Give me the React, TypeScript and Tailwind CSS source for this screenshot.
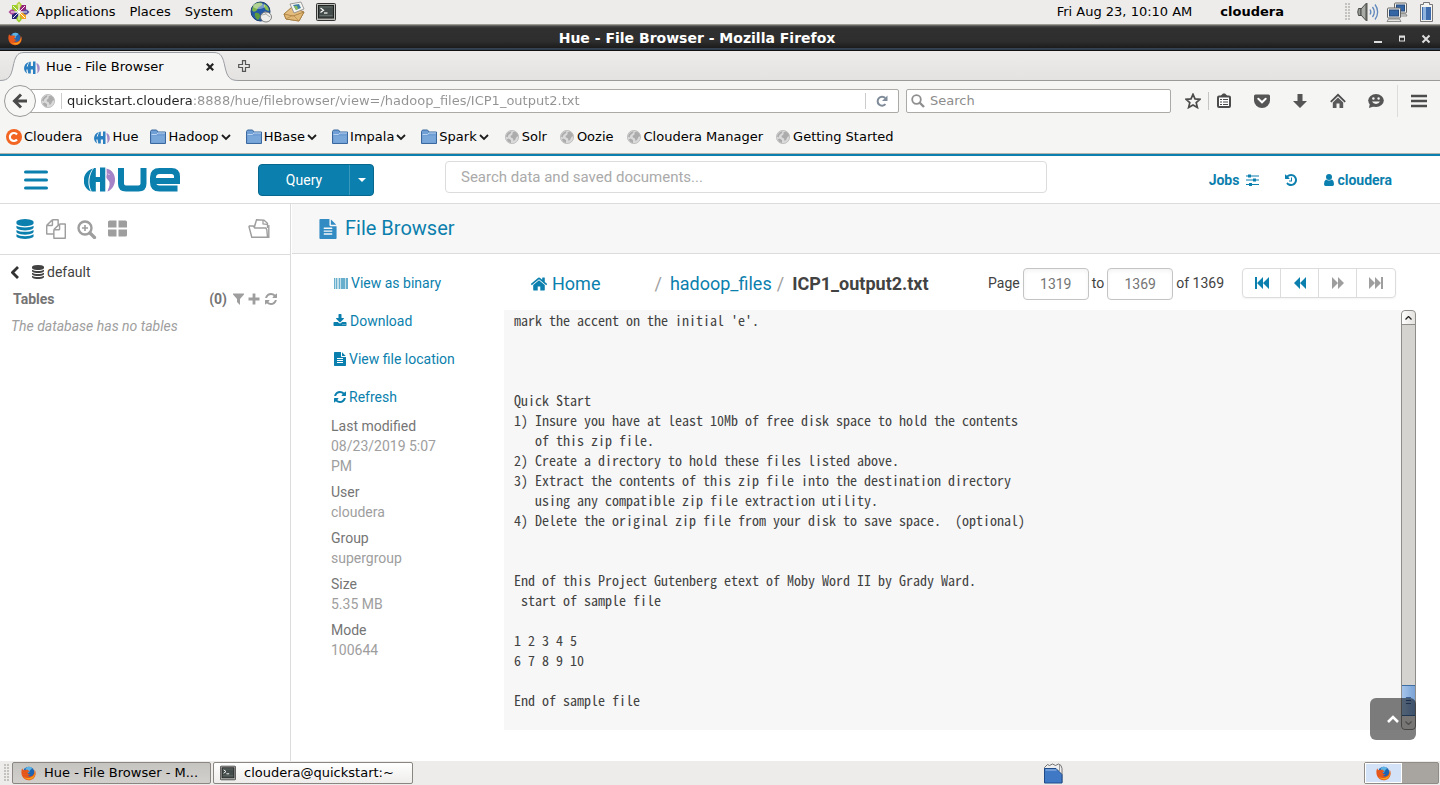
import type { ReactNode } from "react";

/* ---------- glyph icons on the 1792 grid ---------- */

const GLYPHS = {
  refresh:
    "M1639 1056q0 5-1 7-64 268-268 434.5t-478 166.5q-146 0-282.5-55t-243.5-157l-129 129q-19 19-45 19t-45-19-19-45v-448q0-26 19-45t45-19h448q26 0 45 19t19 45-19 45l-137 137q71 66 161 102t187 36q134 0 250-65t186-179q11-17 53-117 8-23 30-23h192q13 0 22.5 9.5t9.5 22.5zm25-800v448q0 26-19 45t-45 19h-448q-26 0-45-19t-19-45 19-45l138-138q-148-137-349-137-134 0-250 65t-186 179q-11 17-53 117-8 23-30 23h-199q-13 0-22.5-9.5t-9.5-22.5v-7q65-268 270-434.5t480-166.5q146 0 284 55.5t245 156.5l130-129q19-19 45-19t45 19 19 45z",
  database:
    "M896 768q237 0 443-43t325-127v170q0 69-103 128t-280 93.5-385 34.5-385-34.5-280-93.5-103-128v-170q119 84 325 127t443 43zm0 768q237 0 443-43t325-127v170q0 69-103 128t-280 93.5-385 34.5-385-34.5-280-93.5-103-128v-170q119 84 325 127t443 43zm0-384q237 0 443-43t325-127v170q0 69-103 128t-280 93.5-385 34.5-385-34.5-280-93.5-103-128v-170q119 84 325 127t443 43zm0-1152q208 0 385 34.5t280 93.5 103 128v128q0 69-103 128t-280 93.5-385 34.5-385-34.5-280-93.5-103-128v-128q0-69 103-128t280-93.5 385-34.5z",
  home: "M1472 992v480q0 26-19 45t-45 19h-384v-384h-256v384h-384q-26 0-45-19t-19-45v-480q0-1 .5-3t.5-3l575-474 575 474q1 2 1 6zm223-69l-62 74q-8 9-21 11h-3q-13 0-21-7l-692-577-692 577q-12 8-24 7-13-2-21-11l-62-74q-8-10-7-23.5t11-21.5l719-599q32-26 76-26t76 26l244 204v-195q0-14 9-23t23-9h192q14 0 23 9t9 23v408l219 182q10 8 11 21.5t-7 23.5z",
  download:
    "M1344 1344q0-26-19-45t-45-19-45 19-19 45 19 45 45 19 45-19 19-45zm256 0q0-26-19-45t-45-19-45 19-19 45 19 45 45 19 45-19 19-45zm128-224v320q0 40-28 68t-68 28h-1472q-40 0-68-28t-28-68v-320q0-40 28-68t68-28h465l135 136q58 56 136 56t136-56l136-136h464q40 0 68 28t28 68zm-325-569q17 41-14 70l-448 448q-18 19-45 19t-45-19l-448-448q-31-29-14-70 17-39 59-39h256v-448q0-26 19-45t45-19h256q26 0 45 19t19 45v448h256q42 0 59 39z",
  fileText:
    "M1596 476q14 14 28 36h-472v-472q22 14 36 28zm-476 164h544v1056q0 40-28 68t-68 28h-1344q-40 0-68-28t-28-68v-1600q0-40 28-68t68-28h800v544q0 40 28 68t68 28zm160 736v-64q0-14-9-23t-23-9h-704q-14 0-23 9t-9 23v64q0 14 9 23t23 9h704q14 0 23-9t9-23zm0-256v-64q0-14-9-23t-23-9h-704q-14 0-23 9t-9 23v64q0 14 9 23t23 9h704q14 0 23-9t9-23zm0-256v-64q0-14-9-23t-23-9h-704q-14 0-23 9t-9 23v64q0 14 9 23t23 9h704q14 0 23-9t9-23z",
  files:
    "M1696 384q40 0 68 28t28 68v1216q0 40-28 68t-68 28h-960q-40 0-68-28t-28-68v-288h-544q-40 0-68-28t-28-68v-672q0-40 20-88t48-76l408-408q28-28 76-48t88-20h416q40 0 68 28t28 68v328q68-40 128-40h416zm-544 213l-299 299h299v-299zm-640-384l-299 299h299v-299zm196 647l316-316v-416h-384v416q0 40-28 68t-68 28h-416v640h512v-256q0-40 20-88t48-76zm956 804v-1152h-384v416q0 40-28 68t-68 28h-416v640h896z",
  history:
    "M1664 896q0 156-61 298t-164 245-245 164-298 61q-172 0-327-72.5t-264-204.5q-7-10-6.5-22.5t8.5-20.5l137-138q10-9 25-9 16 2 23 12 73 95 179 147t225 52q104 0 198.5-40.5t163.5-109.5 109.5-163.5 40.5-198.5-40.5-198.5-109.5-163.5-163.5-109.5-198.5-40.5q-98 0-188 35.5t-160 101.5l137 138q31 30 14 69-17 40-59 40h-448q-26 0-45-19t-19-45v-448q0-42 40-59 39-17 69 14l130 129q107-101 244.5-156.5t284.5-55.5q156 0 298 61t245 164 164 245 61 298zm-640-288v448q0 14-9 23t-23 9h-320q-14 0-23-9t-9-23v-64q0-14 9-23t23-9h224v-352q0-14 9-23t23-9h64q14 0 23 9t9 23z",
};

function Glyph({ name, className }: { name: keyof typeof GLYPHS; className: string }) {
  return (
    <svg viewBox="0 0 1792 1792" className={`shrink-0 ${className}`} fill="currentColor" aria-hidden="true">
      <path d={GLYPHS[name]} />
    </svg>
  );
}

function Svg({ box, className, children }: { box: string; className: string; children: ReactNode }) {
  return (
    <svg viewBox={box} className={`shrink-0 ${className}`} fill="none" aria-hidden="true">
      {children}
    </svg>
  );
}

/* ---------- desktop icons ---------- */

function CentosIcon() {
  return (
    <Svg box="0 0 22 22" className="size-[22px]">
      <path d="M4 4h6.500v6.500h-6.500z" fill="#9ccd2a" />
      <path d="M11.500 4h6.500v6.500h-6.500z" fill="#932279" />
      <path d="M4 11.500h6.500v6.500h-6.500z" fill="#262577" />
      <path d="M11.500 11.500h6.500v6.500h-6.500z" fill="#efa724" />
      <path d="M11 .5l2.500 2.500v2L11 8 8.500 5V3z" fill="#b8d442" />
      <path d="M11 21.500l2.500-2.500v-2L11 14 8.500 17v2z" fill="#9ccd2a" />
      <path d="M.5 11l2.500-2.500h2L8 11 5 13.500H3z" fill="#b04a9a" />
      <path d="M21.500 11L19 8.500h-2L14 11l3 2.500h2z" fill="#5452a0" />
      <path d="M11 3v16M3 11h16M5 5l12 12M17 5L5 17" stroke="#fff" strokeWidth=".9" />
    </Svg>
  );
}

function GlobeMouseIcon() {
  return (
    <Svg box="0 0 22 22" className="size-[22px]">
      <circle cx="10.500" cy="10.500" r="9.500" fill="#2459a5" stroke="#1b3f70" strokeWidth="1" />
      <path d="M3 5c3-4 7-4 9-3 1 2-1 3-3 4s-1 3-3 4-3 1-4-1z" fill="#7fb64b" />
      <path d="M14 3c3 1 5 4 5 7l-3-1-2-3z" fill="#8cc152" />
      <path d="M5 12c3-1 5 1 5 3s-1 3-2 4c-2-1-4-4-3-7z" fill="#5e9a3b" />
      <ellipse cx="9" cy="5" rx="6" ry="3" fill="#fff" opacity=".4" />
      <ellipse cx="16" cy="16" rx="5.500" ry="5" fill="#eeeeec" stroke="#666" strokeWidth=".8" />
      <path d="M12 14l4-1 4 3M16 13l-1-3" stroke="#999" strokeWidth=".8" />
    </Svg>
  );
}

function MailIcon() {
  return (
    <Svg box="0 0 22 22" className="size-[22px]">
      <path d="M1 13l8-7 12 5-5 9-13-2z" fill="#e3bc7e" stroke="#a37a3d" strokeWidth="1" />
      <path d="M7 3l11-2 3 7-10 4z" fill="#f5f5f2" stroke="#888" strokeWidth=".8" />
      <path d="M10 4l6-1 2 4-5 2z" fill="#3f7fa6" />
      <path d="M11 5l3 0 1 3-2 1z" fill="#8dbf5a" />
      <path d="M1 13l9 2 11-4-5 9-13-2z" fill="#e0b775" stroke="#a37a3d" strokeWidth=".8" />
      <path d="M3 18l7-4 6 6" stroke="#b98d4c" strokeWidth=".8" />
    </Svg>
  );
}

function TerminalIcon({ className }: { className: string }) {
  return (
    <Svg box="0 0 20 20" className={className}>
      <rect x=".5" y="1.500" width="19" height="17" rx="1" fill="#b9bbb7" stroke="#333" />
      <rect x="2.500" y="3.500" width="15" height="12.500" fill="#434c4a" stroke="#222" />
      <path d="M4.500 6l3 2.200-3 2.200" stroke="#fff" strokeWidth="1.200" />
      <path d="M8 11h3.500" stroke="#fff" strokeWidth="1.200" />
      <path d="M3.500 13.500h13M3.500 5h13" stroke="#69736f" strokeWidth=".8" />
    </Svg>
  );
}

function FirefoxIcon({ className }: { className: string }) {
  return (
    <Svg box="0 0 16 16" className={className}>
      <circle cx="8.200" cy="7" r="6.200" fill="#1d64b2" />
      <path d="M5 2c2-1.500 5-1.500 7 0-1 2-3 2-3 4s-2 1-3 0-1-3-1-4z" fill="#5cb3e4" />
      <path
        d="M1.300 2.300C0 5 0 9 2 12c2.500 3.600 8 4.200 11.400 1.200C16 10.800 16.200 6.500 14.500 3.600c.3 3-.4 4.800-1.600 6-1.800 2-4.600 2-6 .6 1.700.2 2.600-.5 3.100-1.300-1.800.2-2.600-1-3.200-1.900.5-.8 1.500-.6 2.200-1.200-.8-.6-1.300-1-1.500-1.800-1-.2-2 0-2.600.4C4 4 3.300 4.100 2.700 4.400 2 3.900 1.500 3.200 1.300 2.300z"
        fill="#e6571b"
      />
      <path d="M3 11.500c2.500 3.500 7.500 3.800 10.300.7 2-2.200 2.200-5.200 1.500-7.200.2 3-.7 5.200-2.600 6.500-3 2-7 1.800-9.200 0z" fill="#f8a51b" />
    </Svg>
  );
}

function SpeakerIcon() {
  return (
    <Svg box="0 0 22 20" className="h-5 w-[22px]">
      <path d="M1.500 6.500q-1.500 3.500 0 7h2.500v-7z" fill="#999b97" stroke="#4c4e4b" />
      <path d="M4 7l5-5.500v17L4 13z" fill="#a9aba7" stroke="#4c4e4b" />
      <path d="M9 1h1.500v18H9z" fill="#5b5d59" />
      <path d="M13 7.500c1 1.500 1 3.500 0 5M15.500 5c2.200 3 2.200 7 0 10M18 2.500c3.500 4.500 3.500 10.500 0 15" stroke="#5f86bd" strokeWidth="1.300" />
    </Svg>
  );
}

function NetworkIcon() {
  return (
    <Svg box="0 0 22 21" className="h-[21px] w-[22px]">
      <rect x="8.500" y="1" width="12" height="10" rx="1" fill="#f0f0ee" stroke="#666" />
      <rect x="10.500" y="3" width="8" height="6" fill="#3465a4" stroke="#244a7c" />
      <path d="M13 14h8l-1-2h-6z" fill="#e4e4e2" stroke="#777" strokeWidth=".8" />
      <rect x="1.500" y="6" width="13" height="10" rx="1" fill="#f0f0ee" stroke="#666" />
      <rect x="3.500" y="8" width="9" height="6" fill="#3465a4" stroke="#244a7c" />
      <path d="M1 19.500h14l-1.500-2.500h-11z" fill="#e4e4e2" stroke="#777" strokeWidth=".8" />
    </Svg>
  );
}

function BatteryIcon() {
  return (
    <Svg box="0 0 15 21" className="h-[21px] w-[15px]">
      <path d="M4.500 2.500v-2h6v2h3v17h-12v-17z" fill="#f4f4f2" stroke="#777" />
      <rect x="3" y="5" width="9" height="13" fill="#3f6cac" />
      <rect x="4" y="5" width="3" height="13" fill="#8fb3dd" />
    </Svg>
  );
}

function TrashIcon() {
  return (
    <Svg box="0 0 20 21" className="h-[21px] w-5">
      <path d="M1.500 4.500l3-3 2 1 3-1.500 3 1.500 3-1.500 2.500 1.500 1 3v14h-17.500z" fill="#eee" stroke="#555" strokeWidth=".8" />
      <path d="M1.500 5.500h11.500l6 6v8.500h-17.500z" fill="#3f78c4" stroke="#1f4a8a" />
      <path d="M2.500 7h11" stroke="#9fc0ea" />
      <path d="M16.500 2v6" stroke="#888" strokeWidth=".8" />
    </Svg>
  );
}

function Grip() {
  return <span className="h-[18px] w-[5px] bg-[radial-gradient(circle_at_1px_1px,#c4c2be_1px,transparent_1px)] bg-[size:3px_3px]" />;
}

/* ---------- browser icons ---------- */

function HueMark() {
  return (
    <Svg box="0 0 16 13" className="h-[13px] w-4">
      <path d="M5 1C-1.300 3-1.300 10.500 3.300 12.500 2.400 10.500 2.300 9 2.400 7.500 2.600 5 3.500 3 5 1z" fill="#2a7fc1" />
      <path d="M5.500.8H6.800V5H9V.5h2.500V13H9V8.500H6.800V12.500H4.300C3.200 9 3.300 4 5.500.8z" fill="#2a7fc1" />
      <path d="M2 5.500h4v3H2z" fill="#2a7fc1" />
      <path d="M12.500 2c4.300 1.500 4.300 8.500.5 10.500 1-3 .2-4 .2-6s-1-2.500-.7-4.500z" fill="#a68bc8" />
    </Svg>
  );
}

function HueLogo() {
  return (
    <svg viewBox="0 0 96 26" className="h-[26px] w-24 shrink-0" fill="none" role="img" aria-label="Hue">
      <path d="M9 1.500C-3 5-3 21 7 24.500 3 18 3.500 8 9 1.500z" fill="#0b7fad" />
      <path d="M10 1h1.800v9H16V.5h5.300V24.500H16V15H11.800v9.500H7.700C4 17.500 4.800 7.500 10 1z" fill="#0b7fad" />
      <path d="M22.500 1.500C34 4 33.500 21 23.500 24.500 24.500 21 26 19 25.500 15.500 25 12.500 21.500 12 22.500 9 23 7 22.500 5 22.500 1.500z" fill="#a682c6" />
      <path d="M24 6.500l1.500 1.500" stroke="#fff" strokeWidth=".8" />
      <path d="M37 1v15.500q0 5 5 5h12.500q5 0 5-5v-15.500" stroke="#0b7fad" strokeWidth="6" />
      <path d="M93.500 21.500h-18q-6.500 0-6.500-6.500v-4.500q0-6.500 6.500-6.500h12q5.500 0 5.500 5.500v4.500h-24" stroke="#0b7fad" strokeWidth="6" />
    </svg>
  );
}

function ClouderaIcon() {
  return (
    <Svg box="0 0 16 16" className="size-4">
      <circle cx="8" cy="8" r="8" fill="#f26522" />
      <path d="M11 5.500A4 4 0 1 0 11 10.500" stroke="#fff" strokeWidth="2.200" />
    </Svg>
  );
}

function FolderIcon() {
  return (
    <Svg box="0 0 16 16" className="size-4">
      <path d="M.5 14.500v-12l1-1.500h5l1.500 2h7.500v11.500z" fill="#6f9fd4" stroke="#3b689e" />
      <path d="M1.500 5.500l5 0 1.500-1.500h7" stroke="#b9d2ee" />
      <path d="M2 7h12.500v6.500h-12.500z" fill="#86b0e0" opacity=".5" />
    </Svg>
  );
}

function GlobeIcon() {
  return (
    <Svg box="0 0 14 14" className="size-[14px]">
      <circle cx="7" cy="7" r="6.600" fill="#dadada" stroke="#b8b8b8" strokeWidth=".8" />
      <path
        d="M1 6.500C1.500 3.500 4 1.500 6.500 1.200L6 3 3.500 5l-1 2.500zM7.500 2.500l2-1c2 .8 3.400 2.500 3.800 4.500l-1.800 1-1.500 3-1.500 1-.5-2.500-2-1L5.500 6l2-1.500zM3.500 8.500l2.500 1.500v3C4 12.800 2.500 11 1.800 9.500z"
        fill="#acacac"
      />
    </Svg>
  );
}

function SmallChevron() {
  return (
    <Svg box="0 0 10 10" className="size-[10px]">
      <path d="M1 3l4 4 4-4" stroke="#1c1c1c" strokeWidth="1.800" />
    </Svg>
  );
}

function StarIcon() {
  return (
    <Svg box="0 0 16 16" className="size-4">
      <path d="M8 1.300l2 4.600 5 .4-3.800 3.300 1.200 4.900L8 11.900l-4.400 2.600 1.200-4.900L1 6.300l5-.4z" stroke="#4c4c4c" strokeWidth="1.700" />
    </Svg>
  );
}

function ClipListIcon() {
  return (
    <Svg box="0 0 16 16" className="size-4">
      <rect x="2" y="3.500" width="12" height="10.500" rx="1" fill="#fff" stroke="#4c4c4c" strokeWidth="2" />
      <path d="M4.500 3L7 .5h2L11.500 3z" fill="#4c4c4c" />
      <path d="M4 6.500h2M7 6.500h5M4 9h2M7 9h5M4 11.500h2M7 11.500h5" stroke="#4c4c4c" strokeWidth="1.200" />
    </Svg>
  );
}

function PocketIcon() {
  return (
    <Svg box="0 0 16 16" className="size-4">
      <path d="M1.500 1.500h13q1.500 0 1.500 1.500v4.500a8 7.500 0 0 1-16 0v-4.500q0-1.500 1.500-1.500z" fill="#555" />
      <path d="M4.300 5.800L8 9.300l3.700-3.500" stroke="#fff" strokeWidth="2" strokeLinecap="round" />
    </Svg>
  );
}

function DownArrowIcon() {
  return (
    <Svg box="0 0 16 16" className="size-4">
      <path d="M5.500 1h5v7H15l-7 7-7-7h4.500z" fill="#555" />
    </Svg>
  );
}

function HouseIcon() {
  return (
    <Svg box="0 0 16 16" className="size-4">
      <path d="M.8 8.800L8 1.800l7.200 7" stroke="#4c4c4c" strokeWidth="1.800" />
      <path d="M2.800 9.500L8 4.500l5.200 5v5.500h-3.700v-4.500h-3v4.500h-3.700z" fill="#5a5a5a" />
    </Svg>
  );
}

function SmileIcon() {
  return (
    <Svg box="0 0 16 16" className="size-4">
      <ellipse cx="8" cy="7.500" rx="7.800" ry="6.500" fill="#555" />
      <path d="M2 10l-1 5 6-2z" fill="#555" />
      <circle cx="5.400" cy="5.500" r="1.200" fill="#f4f4f2" />
      <circle cx="10.600" cy="5.500" r="1.200" fill="#f4f4f2" />
      <path d="M4 8.500h8q-1.300 2.400-4 2.400t-4-2.400z" fill="#f4f4f2" />
    </Svg>
  );
}

/* ---------- desktop and window chrome ---------- */

function DesktopPanel() {
  return (
    <div className="flex h-[25px] items-center border-b border-[#9b9a95] bg-[#edecea] pr-1.5 pl-2 text-[13px] text-black">
      <CentosIcon />
      <nav className="ml-1.5 flex gap-3.5">
        <button type="button">Applications</button>
        <button type="button">Places</button>
        <button type="button">System</button>
      </nav>
      <div className="ml-[17px] flex flex-1 items-center gap-[11px]">
        <GlobeMouseIcon />
        <MailIcon />
        <TerminalIcon className="size-5" />
      </div>
      <span>Fri Aug 23, 10:10 AM</span>
      <span className="ml-7 font-bold">cloudera</span>
      <div className="ml-[61px] flex items-center gap-[7px]">
        <Grip />
        <SpeakerIcon />
        <NetworkIcon />
        <span className="ml-1">
          <BatteryIcon />
        </span>
      </div>
    </div>
  );
}

function TitleBar() {
  return (
    <div className="flex h-[26px] items-center border-t border-[#666660] bg-[linear-gradient(#4a4a4a_0,#303030_2px,#2e2e2e_15px,#1c1c1c_22px,#4d6785_23px,#111_24px)] px-2 text-white">
      <FirefoxIcon className="size-[14px]" />
      <h1 className="flex-1 pr-8 pl-8 pb-0.5 text-center text-sm leading-5 font-bold">Hue - File Browser - Mozilla Firefox</h1>
      <div className="flex gap-3">
        <button type="button" aria-label="Minimize">
          <Svg box="0 0 12 12" className="size-3">
            <path d="M2 9h8" stroke="#ddd" strokeWidth="2" />
          </Svg>
        </button>
        <button type="button" aria-label="Maximize">
          <Svg box="0 0 12 12" className="size-3">
            <rect x="3.500" y="4" width="5" height="4" stroke="#ddd" />
            <path d="M3 3.500h6" stroke="#ddd" strokeWidth="2" />
          </Svg>
        </button>
        <button type="button" aria-label="Close window">
          <Svg box="0 0 12 12" className="size-3">
            <path d="M2.500 2.500l7 7M9.500 2.500l-7 7" stroke="#ddd" strokeWidth="2" />
          </Svg>
        </button>
      </div>
    </div>
  );
}

function TabStrip() {
  return (
    <div className="flex h-[30px] bg-gradient-to-b from-[#edecea] to-[#e3e2e0] text-[13px]">
      <Svg box="0 0 24 30" className="h-[30px] w-6">
        <path d="M0 29.500C9 29.500 11 25 13 16 15 6 17 1.500 24 1.500V30H0z" fill="#f5f5f3" />
        <path d="M0 29.500C9 29.500 11 25 13 16 15 6 17 1.500 24 1.500" stroke="#9a9da3" />
      </Svg>
      <div className="mt-px flex w-[190px] items-center border-t border-[#9a9da3] bg-[#f5f5f3]">
        <HueMark />
        <span className="flex-1 pl-1.5 text-black">Hue - File Browser</span>
        <button type="button" aria-label="Close tab">
          <Svg box="0 0 8 8" className="size-2">
            <path d="M.8.8l6.400 6.400M7.200.8L.8 7.200" stroke="#222" strokeWidth="2.200" />
          </Svg>
        </button>
      </div>
      <Svg box="0 0 24 30" className="h-[30px] w-6">
        <path d="M24 29.500C15 29.500 13 25 11 16 9 6 7 1.500 0 1.500V30H24z" fill="#f5f5f3" />
        <path d="M24 29.500C15 29.500 13 25 11 16 9 6 7 1.500 0 1.500" stroke="#9a9da3" />
      </Svg>
      <div className="flex flex-1 items-center border-b border-[#9a9a98]">
        <button type="button" aria-label="New tab">
          <Svg box="0 0 12 12" className="size-3">
            <path d="M4.500.7h3v3.800h3.800v3H7.500v3.800h-3V7.500H.7v-3h3.800z" stroke="#555" strokeWidth="1.200" />
          </Svg>
        </button>
      </div>
    </div>
  );
}

function NavToolbar() {
  return (
    <div className="flex h-10 items-center bg-[#f5f5f3] pr-[13px] pl-1 text-[13px]">
      <button
        type="button"
        aria-label="Back"
        className="relative z-10 flex size-8 shrink-0 items-center justify-center rounded-full border border-[#9a9a98] bg-[#f7f7f5]"
      >
        <Svg box="0 0 16 16" className="size-4">
          <path d="M9 1.500L2.500 8 9 14.500M3 8h12" stroke="#4a4a4a" strokeWidth="3" />
        </Svg>
      </button>
      <div className="-ml-2 flex h-6 flex-1 items-center rounded-r-xs border border-[#acaaa6] bg-white pl-3">
        <GlobeIcon />
        <span className="mr-[5px] ml-1.5 h-4 w-px bg-[#ccc]" />
        <input
          aria-label="Address"
          className="min-w-0 flex-1 bg-[linear-gradient(to_right,#222_126px,#929292_126px)] bg-clip-text text-transparent outline-none"
          defaultValue="quickstart.cloudera:8888/hue/filebrowser/view=/hadoop_files/ICP1_output2.txt"
        />
        <span className="h-4 w-px bg-[#ccc]" />
        <button type="button" aria-label="Reload" className="mr-2.5 ml-2.5">
          <Svg box="0 0 12 12" className="size-3">
            <path d="M9.500 9.200A4.500 4.500 0 1 1 9.300 3" stroke="#7f8b99" strokeWidth="2" />
            <path d="M11.500.5v5.500H6z" fill="#7f8b99" />
          </Svg>
        </button>
      </div>
      <label className="ml-[7px] flex h-6 w-[265px] items-center rounded-xs border border-[#acaaa6] bg-white pl-1">
        <Svg box="0 0 14 14" className="size-[14px]">
          <circle cx="5.500" cy="5.500" r="4.300" stroke="#8f8f8f" strokeWidth="1.800" />
          <path d="M8.500 8.500l4.500 4.500" stroke="#8f8f8f" strokeWidth="2.400" />
        </Svg>
        <input aria-label="Search the web" placeholder="Search" className="w-full pl-[5px] outline-none placeholder:text-[#8c8c8c]" />
      </label>
      <button type="button" aria-label="Bookmark this page" className="ml-3.5">
        <StarIcon />
      </button>
      <span className="mr-[7px] ml-[7px] h-[18px] w-px bg-[#c5c5c3]" />
      <div className="flex gap-[22px]">
        <button type="button" aria-label="Bookmarks list">
          <ClipListIcon />
        </button>
        <button type="button" aria-label="Pocket">
          <PocketIcon />
        </button>
        <button type="button" aria-label="Downloads">
          <DownArrowIcon />
        </button>
        <button type="button" aria-label="Home page">
          <HouseIcon />
        </button>
        <button type="button" aria-label="Chat">
          <SmileIcon />
        </button>
      </div>
      <span className="mr-[13px] ml-[13px] h-8 w-px bg-[#dcdcda]" />
      <button type="button" aria-label="Open menu">
        <Svg box="0 0 16 14" className="h-3.5 w-4">
          <path d="M0 2h16M0 7h16M0 12h16" stroke="#4c4c4c" strokeWidth="2.400" />
        </Svg>
      </button>
    </div>
  );
}

const FOLDERS = ["Hadoop", "HBase", "Impala", "Spark"];
const PAGES = ["Solr", "Oozie", "Cloudera Manager", "Getting Started"];

function BookmarksBar() {
  return (
    <div className="flex h-[33px] items-center border-b border-[#b5b3ae] bg-[#f5f5f3] pl-1.5 text-[13px] text-black">
      <a href="#cloudera" className="flex items-center gap-0.5">
        <ClouderaIcon />
        Cloudera
      </a>
      <a href="#hue" className="ml-3 flex items-center gap-0.5">
        <HueMark />
        Hue
      </a>
      <div className="ml-3 flex gap-[15px]">
        {FOLDERS.map((name) => (
          <button type="button" key={name} className="flex items-center gap-0.5">
            <FolderIcon />
            {name}
            <SmallChevron />
          </button>
        ))}
      </div>
      <div className="ml-4 flex gap-[13px]">
        {PAGES.map((name) => (
          <a href="#bookmark" key={name} className="flex items-center gap-[3px]">
            <GlobeIcon />
            {name}
          </a>
        ))}
      </div>
    </div>
  );
}

/* ---------- Hue application ---------- */

function HueHeader() {
  return (
    <header className="flex h-[50px] items-center border-t-2 border-b border-t-[#0b7fad] border-b-[#dcdcdc] bg-white pr-12 pl-6 text-sm text-[#0b7fad]">
      <button type="button" aria-label="Menu">
        <Svg box="0 0 24 20" className="h-5 w-6">
          <path d="M1.500 2h21M1.500 10h21M1.500 18h21" stroke="#0b7fad" strokeWidth="3" strokeLinecap="round" />
        </Svg>
      </button>
      <a href="#home" className="ml-9">
        <HueLogo />
      </a>
      <div className="ml-[78px] flex h-8 rounded-sm border border-[#07688f] bg-[#0b7fad] text-white">
        <button type="button" className="w-[90px]">
          Query
        </button>
        <button type="button" aria-label="Query types" className="flex w-6 items-center justify-center border-l border-[#3b98bd]">
          <Svg box="0 0 8 4" className="h-1 w-2">
            <path d="M0 0h8l-4 4z" fill="#fff" />
          </Svg>
        </button>
      </div>
      <input
        aria-label="Search data and saved documents"
        placeholder="Search data and saved documents..."
        className="mr-[162px] mb-1.5 ml-[71px] h-8 min-w-0 flex-1 rounded-sm border border-[#dcdcdc] px-[15px] text-[15px] text-gray-700 outline-none placeholder:text-[#aaa]"
      />
      <a href="#jobs" className="flex items-center gap-[7px] font-bold">
        Jobs
        <Svg box="0 0 13 12" className="h-3 w-[13px]">
          <path d="M0 2h13M0 6h13M0 10.500h13" stroke="#0b7fad" strokeWidth="1.200" />
          <path d="M3.500 .5v3M8.500 4.500v3M4.500 9v3" stroke="#0b7fad" strokeWidth="3" />
        </Svg>
      </a>
      <button type="button" aria-label="History" className="ml-[25px]">
        <Glyph name="history" className="size-[14px]" />
      </button>
      <a href="#user" className="ml-[26px] flex items-center gap-[3px] font-bold">
        <Svg box="0 0 10 12" className="h-3 w-[10px]">
          <circle cx="5" cy="3" r="3" fill="#0b7fad" />
          <path d="M2 5.500q3 2 6 0 2 1 2 4.500 0 2-1.500 2h-7q-1.500 0-1.500-2 0-3.500 2-4.500z" fill="#0b7fad" />
        </Svg>
        cloudera
      </a>
    </header>
  );
}

function Sidebar() {
  return (
    <aside className="w-[291px] shrink-0 border-r border-[#dcdcdc] text-sm">
      <div className="flex h-[51px] items-center gap-[11px] border-b border-[#dcdcdc] pr-5 pl-[15px] text-[#9e9e9e]">
        <button type="button" aria-label="Databases" className="text-[#0b7fad]">
          <Glyph name="database" className="size-5" />
        </button>
        <button type="button" aria-label="Documents">
          <Glyph name="files" className="size-5" />
        </button>
        <button type="button" aria-label="Explore">
          <Svg box="0 0 20 20" className="size-5">
            <circle cx="8" cy="9" r="6.500" stroke="#9e9e9e" strokeWidth="2.400" />
            <path d="M13 14l4.500 4.500" stroke="#9e9e9e" strokeWidth="3.200" strokeLinecap="round" />
            <path d="M8 6v6M5 9h6" stroke="#9e9e9e" strokeWidth="1.600" />
          </Svg>
        </button>
        <button type="button" aria-label="Dashboards">
          <Svg box="0 0 20 20" className="size-5">
            <path d="M0 3q0-1.500 1.500-1.500h7v7H0zM10.500 1.500h7q1.500 0 1.500 1.500v5.500h-8.500zM0 10.500h8.500V17.500h-7Q0 17.500 0 16zM10.500 10.500H19V16q0 1.500-1.500 1.500h-7z" fill="#9e9e9e" />
          </Svg>
        </button>
        <button type="button" aria-label="Open document" className="ml-auto">
          <Svg box="0 0 22 20" className="h-5 w-[22px]">
            <path d="M.8 7h4.500l1.500 2h11l1 1.500.7 7.800M.8 7l3 11.300H20.800V6" stroke="#9e9e9e" strokeWidth="1.400" />
            <path d="M6.500 7L8.500.8l7.500.4 3.500 3V9M8.500 1L6.500 8M15 1.500v3.500l4 .3" stroke="#9e9e9e" strokeWidth="1.300" />
          </Svg>
        </button>
      </div>
      <div className="flex flex-col gap-[7px] px-[11px] pt-[7px]">
        <button type="button" className="flex items-center text-[#424242]">
          <Svg box="0 0 8 13" className="h-[13px] w-2">
            <path d="M7 1L1.500 6.500 7 12" stroke="#333" strokeWidth="2.800" />
          </Svg>
          <Glyph name="database" className="ml-3 size-[14px]" />
          <span className="pl-0.5">default</span>
        </button>
        <div className="flex items-center gap-1.5 pl-0.5 pr-px font-bold text-[#757575]">
          <h2 className="flex-1">Tables</h2>
          <span>(0)</span>
          <div className="flex items-center gap-1 text-[#9e9e9e]">
            <button type="button" aria-label="Filter tables">
              <Svg box="0 0 11 12" className="h-3 w-[11px]">
                <path d="M0 .5h11v1L7 6v6L4 9V6L0 1.500z" fill="#9e9e9e" />
              </Svg>
            </button>
            <button type="button" aria-label="Add table">
              <Svg box="0 0 12 12" className="size-3">
                <path d="M6 .5v11M.5 6h11" stroke="#9e9e9e" strokeWidth="2.800" />
              </Svg>
            </button>
            <button type="button" aria-label="Refresh tables">
              <Glyph name="refresh" className="size-[14px]" />
            </button>
          </div>
        </div>
        <p className="text-[#9e9e9e] italic">The database has no tables</p>
      </div>
    </aside>
  );
}

const DETAILS = [
  ["Last modified", "08/23/2019 5:07 PM"],
  ["User", "cloudera"],
  ["Group", "supergroup"],
  ["Size", "5.35 MB"],
  ["Mode", "100644"],
];

function BarcodeIcon() {
  return (
    <Svg box="0 0 14 11" className="h-[11px] w-[14px]">
      <path d="M0 0h14v11H0z" fill="#0b7fad" opacity=".25" />
      <path d="M0 0h1v11h-1zM2 0h1v11h-1zM5 0h1v11h-1zM7 0h4v11h-4zM12 0h2v11h-2z" fill="#0b7fad" opacity=".5" />
    </Svg>
  );
}

function FileActions() {
  return (
    <div className="w-[173px] shrink-0 pt-2.5 text-sm">
      <nav className="flex flex-col pl-0.5 text-[#0b7fad]">
        <a href="#binary" className="flex h-[38px] items-center gap-[3px] pl-px">
          <BarcodeIcon />
          View as binary
        </a>
        <a href="#download" className="flex h-[38px] items-center gap-[3px]">
          <Glyph name="download" className="size-[14px]" />
          Download
        </a>
        <a href="#location" className="flex h-[38px] items-center gap-0.5">
          <Glyph name="fileText" className="size-[14px]" />
          View file location
        </a>
        <a href="#refresh" className="flex h-[38px] items-center gap-0.5">
          <Glyph name="refresh" className="size-[14px]" />
          Refresh
        </a>
      </nav>
      <dl className="flex w-[125px] flex-col gap-1.5">
        {DETAILS.map(([term, value]) => (
          <div key={term}>
            <dt className="text-[#757575]">{term}</dt>
            <dd className="text-[#9e9e9e]">{value}</dd>
          </div>
        ))}
      </dl>
    </div>
  );
}

function PageButton({ label, enabled, children }: { label: string; enabled: boolean; children: ReactNode }) {
  return (
    <button
      type="button"
      aria-label={label}
      disabled={!enabled}
      className={`flex w-[38px] items-center justify-center ${enabled ? "text-[#0b7fad]" : "text-[#9e9e9e]"}`}
    >
      {children}
    </button>
  );
}

function Pagination() {
  return (
    <div className="flex h-8 text-sm text-[#424242]">
      <label htmlFor="page-from" className="pt-[5px]">
        Page
      </label>
      <input
        id="page-from"
        defaultValue="1319"
        className="mx-[3px] h-8 w-[66px] rounded-sm border border-[#c4c4c4] text-center text-[#757575] shadow-inner outline-none"
      />
      <label htmlFor="page-to" className="pt-[5px]">
        to
      </label>
      <input
        id="page-to"
        defaultValue="1369"
        className="mx-[3px] h-8 w-[66px] rounded-sm border border-[#c4c4c4] text-center text-[#757575] shadow-inner outline-none"
      />
      <span className="pt-[5px]">of 1369</span>
      <div className="ml-[18px] flex h-[30px] divide-x divide-[#dcdcdc] rounded-sm border border-[#dcdcdc] shadow-xs">
        <PageButton label="First page" enabled>
          <Svg box="0 0 14 12" className="h-3 w-3.5">
            <path d="M0 0h2v12h-2zM8 0v12l-6-6zM14 0v12l-6-6z" fill="currentColor" />
          </Svg>
        </PageButton>
        <PageButton label="Previous page" enabled>
          <Svg box="0 0 12 12" className="size-3">
            <path d="M6 0v12l-6-6zM12 0v12l-6-6z" fill="currentColor" />
          </Svg>
        </PageButton>
        <PageButton label="Next page" enabled={false}>
          <Svg box="0 0 12 12" className="size-3">
            <path d="M0 0v12l6-6zM6 0v12l6-6z" fill="currentColor" />
          </Svg>
        </PageButton>
        <PageButton label="Last page" enabled={false}>
          <Svg box="0 0 14 12" className="h-3 w-3.5">
            <path d="M12 0h2v12h-2zM0 0v12l6-6zM6 0v12l6-6z" fill="currentColor" />
          </Svg>
        </PageButton>
      </div>
    </div>
  );
}

const FILE_TEXT = `mark the accent on the initial 'e'.



Quick Start
1) Insure you have at least 10Mb of free disk space to hold the contents
   of this zip file.
2) Create a directory to hold these files listed above.
3) Extract the contents of this zip file into the destination directory
   using any compatible zip file extraction utility.
4) Delete the original zip file from your disk to save space.  (optional)


End of this Project Gutenberg etext of Moby Word II by Grady Ward.
 start of sample file

1 2 3 4 5
6 7 8 9 10

End of sample file`;

function ScrollBar() {
  return (
    <div className="flex w-[15px] shrink-0 flex-col rounded-sm border border-[#8f8d89] bg-[#d5d3d0]">
      <button
        type="button"
        aria-label="Scroll up"
        className="flex h-3.5 items-center justify-center rounded-t-sm border-b border-[#8f8d89] bg-gradient-to-r from-white to-[#e4e2df]"
      >
        <Svg box="0 0 7 4" className="h-1 w-[7px]">
          <path d="M.5 3.500l3-3 3 3" stroke="#222" strokeWidth="1.300" />
        </Svg>
      </button>
      <div className="flex-1" />
      <div className="flex h-[31px] flex-col items-center justify-center gap-0.5 border-y border-[#3f6ea5] bg-gradient-to-r from-[#a5c4ea] to-[#7ba3d6]">
        <span className="h-px w-[5px] bg-[#3a5f92]" />
        <span className="h-px w-[5px] bg-[#3a5f92]" />
        <span className="h-px w-[5px] bg-[#3a5f92]" />
      </div>
      <button type="button" aria-label="Scroll down" className="flex h-[13px] items-center justify-center rounded-b-sm bg-[#eeecea]">
        <Svg box="0 0 7 4" className="h-1 w-[7px]">
          <path d="M.5.5l3 3 3-3" stroke="#999" strokeWidth="1.300" />
        </Svg>
      </button>
    </div>
  );
}

function FileView() {
  return (
    <div className="min-w-0 flex-1">
      <div className="flex h-14 items-start pt-3.5 pr-5">
        <nav aria-label="Breadcrumb" className="flex flex-1 items-center pl-[26px] text-lg leading-8 text-[#0b7fad]">
          <a href="#root" className="flex items-center gap-1">
            <Glyph name="home" className="size-[18px]" />
            Home
          </a>
          <span className="pr-2 pl-[54px] text-[#9e9e9e]">/</span>
          <a href="#hadoop_files">hadoop_files</a>
          <span className="pr-2 pl-[5px] text-[#9e9e9e]">/</span>
          <span className="font-bold text-[#424242]">ICP1_output2.txt</span>
        </nav>
        <Pagination />
      </div>
      <div className="relative">
        <div className="flex">
          <pre className="min-w-0 flex-1 overflow-hidden bg-[#f7f7f7] px-2.5 pb-5 font-['Noto_Sans_Mono_CJK_SC','Liberation_Mono',monospace] text-sm leading-5 text-[#424242]">
            {FILE_TEXT}
          </pre>
          <ScrollBar />
        </div>
        <button
          type="button"
          aria-label="Back to top"
          className="absolute right-0 -bottom-2.5 flex h-[42px] w-[46px] items-center justify-center rounded-md bg-black/50"
        >
          <Svg box="0 0 12 8" className="h-2 w-3">
            <path d="M1 7l5-5 5 5" stroke="#fff" strokeWidth="2.600" />
          </Svg>
        </button>
      </div>
    </div>
  );
}

function FileBrowser() {
  return (
    <main className="ml-px min-w-0 flex-1">
      <div className="flex h-[50px] items-center border-b border-[#dcdcdc] bg-[#f7f7f7] pl-[26px] text-[#0b7fad]">
        <Glyph name="fileText" className="size-5 text-[#338bc4]" />
        <h1 className="pb-px pl-[7px] text-xl">File Browser</h1>
      </div>
      <div className="flex pr-6 pl-[39px]">
        <FileActions />
        <FileView />
      </div>
    </main>
  );
}

/* ---------- bottom panel ---------- */

function TaskBar() {
  return (
    <footer className="flex h-6 items-center bg-[#edecea] pl-1 text-[13px] text-black">
      <Grip />
      <button
        type="button"
        className="ml-[3px] flex h-[22px] w-[199px] items-center gap-2 rounded-xs border border-[#8a8782] bg-gradient-to-b from-[#c6c4c0] to-[#d2d0cd] pl-2"
      >
        <FirefoxIcon className="size-[15px]" />
        Hue - File Browser - M...
      </button>
      <button
        type="button"
        className="ml-0.5 flex h-[22px] w-[200px] items-center gap-2 rounded-xs border border-[#8a8782] bg-gradient-to-b from-white to-[#eeedeb] pl-1.5"
      >
        <TerminalIcon className="size-4" />
        cloudera@quickstart:~
      </button>
      <div className="flex-1" />
      <button type="button" aria-label="Trash" className="mr-[301px]">
        <TrashIcon />
      </button>
      <div className="mr-px flex h-[22px] w-[75px] rounded-xs border border-[#8f8c87] bg-[#a8a5a1]">
        <button type="button" aria-label="Workspace 1" className="flex w-[37px] items-center justify-center border border-white bg-[#d3e2f7]">
          <FirefoxIcon className="size-[15px]" />
        </button>
        <button type="button" aria-label="Workspace 2" className="flex-1" />
      </div>
    </footer>
  );
}

export default function App() {
  return (
    <div className="flex min-h-screen flex-col bg-white font-['DejaVu_Sans',sans-serif]">
      <DesktopPanel />
      <TitleBar />
      <TabStrip />
      <NavToolbar />
      <BookmarksBar />
      <div className="flex flex-1 flex-col font-['Roboto',sans-serif]">
        <HueHeader />
        <div className="flex flex-1">
          <Sidebar />
          <FileBrowser />
        </div>
      </div>
      <TaskBar />
    </div>
  );
}
